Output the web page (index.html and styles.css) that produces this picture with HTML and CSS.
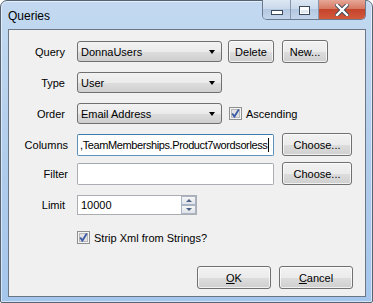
FILE: index.html
```html
<!DOCTYPE html>
<html>
  <head>
    <title>Queries</title>
    <link rel="stylesheet" href="styles.css">
  </head>
  <body>
    <div class="window">
      <div class="titlebar">
        <span class="title">Queries</span>
        <div class="caption">
          <div class="cap-btn cap-min"><span class="glyph-min"></span></div>
          <div class="cap-btn cap-max"><span class="glyph-max"></span></div>
          <div class="cap-btn cap-close">
            <svg width="14" height="12" viewBox="0 0 14 12">
              <path d="M2 1 L12 11 M12 1 L2 11" stroke="#3b4a5c" stroke-width="4.2" stroke-linecap="square"/>
              <path d="M2 1 L12 11 M12 1 L2 11" stroke="#fff" stroke-width="2.4" stroke-linecap="square"/>
            </svg>
          </div>
        </div>
      </div>

      <div class="client">
        <div class="row row-query">
          <label class="lbl">Query</label>
          <div class="combo"><span>DonnaUsers</span><i class="arrow"></i></div>
          <button class="btn btn-delete">Delete</button>
          <button class="btn btn-new">New...</button>
        </div>

        <div class="row row-type">
          <label class="lbl">Type</label>
          <div class="combo"><span>User</span><i class="arrow"></i></div>
        </div>

        <div class="row row-order">
          <label class="lbl">Order</label>
          <div class="combo"><span>Email Address</span><i class="arrow"></i></div>
          <span class="check check-asc">
            <svg width="13" height="13" viewBox="0 0 13 13">
              <rect x="0.5" y="0.5" width="12" height="12" fill="#f4f4f4" stroke="#8e8f8f"/>
              <rect x="2.5" y="2.5" width="8" height="8" fill="#e2e2e2" stroke="#b8b8b8"/>
              <path d="M3.2 6.4 L5.4 9.6 L9.8 2.6" fill="none" stroke="#3d5aa6" stroke-width="1.8"/>
            </svg>
            Ascending
          </span>
        </div>

        <div class="row row-columns">
          <label class="lbl lbl-wide">Columns</label>
          <div class="textbox focused"><span class="tight">,TeamMemberships.Product7wordsorless</span><i class="caret"></i></div>
          <button class="btn btn-choose">Choose...</button>
        </div>

        <div class="row row-filter">
          <label class="lbl lbl-wide">Filter</label>
          <div class="textbox"></div>
          <button class="btn btn-choose">Choose...</button>
        </div>

        <div class="row row-limit">
          <label class="lbl">Limit</label>
          <div class="numeric">
            <span class="num-val">10000</span>
            <div class="spin">
              <div class="spin-btn"><i class="tri-up"></i></div>
              <div class="spin-btn"><i class="tri-down"></i></div>
            </div>
          </div>
        </div>

        <div class="row row-strip">
          <span class="lbl"></span>
          <span class="check">
            <svg width="13" height="13" viewBox="0 0 13 13">
              <rect x="0.5" y="0.5" width="12" height="12" fill="#f4f4f4" stroke="#8e8f8f"/>
              <rect x="2.5" y="2.5" width="8" height="8" fill="#e2e2e2" stroke="#b8b8b8"/>
              <path d="M3.2 6.4 L5.4 9.6 L9.8 2.6" fill="none" stroke="#3d5aa6" stroke-width="1.8"/>
            </svg>
            Strip Xml from Strings?
          </span>
        </div>

        <div class="row row-buttons">
          <button class="btn btn-dialog"><u>O</u>K</button>
          <button class="btn btn-dialog"><u>C</u>ancel</button>
        </div>
      </div>
    </div>
  </body>
</html>
```

FILE: styles.css
```css
/* Windows 7 style dialog */
body {
  margin: 0;
  background: #fff;
  font-family: "Liberation Sans", Arial, sans-serif;
  font-size: 11px;
  color: #000;
}

.window {
  box-sizing: border-box;
  width: 373px;
  height: 303px;
  border: 1px solid #566372;
  border-radius: 7px 7px 2px 2px;
  padding: 0 6px 5px 7px;
  background: linear-gradient(to bottom, #c3d9f1 0%, #bcd5ef 20%, #aecbec 60%, #a5c6ec 100%);
  box-shadow: inset 0 0 0 1px rgba(255, 255, 255, 0.55);
}

.titlebar {
  height: 28px;
  display: flex;
  align-items: flex-start;
}

.title {
  font-size: 12px;
  margin-top: 8px;
  color: #000;
}

.caption {
  margin-left: auto;
  display: flex;
  height: 19px;
  margin-top: -1px;
  border: 1px solid #6c7a8d;
  border-top: none;
  border-radius: 0 0 5px 5px;
  overflow: hidden;
}

.cap-btn {
  height: 19px;
  display: flex;
  align-items: center;
  justify-content: center;
}

.cap-min,
.cap-max {
  width: 27px;
  background: linear-gradient(to bottom, #dde7f3 0%, #cad9eb 45%, #b3c7e0 50%, #c3d5eb 100%);
  border-right: 1px solid #8797ab;
}

.cap-close {
  width: 46px;
  background: linear-gradient(to bottom, #e6a797 0%, #d77a63 45%, #c5442c 50%, #d35a3c 100%);
}

.glyph-min {
  width: 10px;
  height: 3px;
  margin-top: 5px;
  background: #fff;
  border: 1px solid #3b4a5c;
}

.glyph-max {
  box-sizing: border-box;
  width: 11px;
  height: 9px;
  margin-top: 1px;
  border: 1px solid #3b4a5c;
  box-shadow: inset 0 0 0 1px #fff, inset 0 3px 0 0 #fff;
  background: #dfe8f3;
}

.client {
  box-sizing: border-box;
  height: 268px;
  border: 1px solid #6b7785;
  background: #f0f0f0;
  padding-top: 10px;
}

.row {
  display: flex;
  align-items: center;
  height: 23px;
}

.row-type,
.row-order,
.row-limit {
  margin-top: 8px;
}

.row-columns {
  margin-top: 8px;
}

.row-filter {
  margin-top: 6px;
}

.row-strip {
  margin-top: 10px;
}

.row-buttons {
  margin-top: 17px;
  justify-content: flex-end;
  gap: 8px;
  padding-right: 12px;
}

.lbl {
  box-sizing: border-box;
  width: 68px;
  flex: none;
  padding-right: 12px;
  text-align: right;
}

.lbl-wide {
  padding-right: 9px;
}

.combo {
  box-sizing: border-box;
  width: 145px;
  height: 21px;
  border: 1px solid #707070;
  border-radius: 3px;
  background: linear-gradient(to bottom, #f2f2f2 0%, #ebebeb 50%, #dddddd 51%, #cfcfcf 100%);
  display: flex;
  align-items: center;
  padding-left: 3px;
}

.arrow {
  margin-left: auto;
  margin-right: 6px;
  width: 0;
  height: 0;
  border-left: 3.5px solid transparent;
  border-right: 3.5px solid transparent;
  border-top: 4px solid #000;
}

.btn {
  box-sizing: border-box;
  height: 23px;
  border: 1px solid #707070;
  border-radius: 3px;
  background: linear-gradient(to bottom, #f2f2f2 0%, #ebebeb 50%, #dddddd 51%, #cfcfcf 100%);
  font-family: "Liberation Sans", Arial, sans-serif;
  font-size: 11px;
  color: #000;
  padding: 0;
  box-shadow: inset 0 0 0 1px rgba(255, 255, 255, 0.7);
}

.btn-delete {
  width: 46px;
  margin-left: 6px;
}

.btn-new {
  width: 46px;
  margin-left: 8px;
}

.btn-choose {
  width: 70px;
  margin-left: 8px;
}

.btn-dialog {
  width: 74px;
}

.check {
  display: flex;
  align-items: center;
  gap: 4px;
}

.check-asc {
  margin-left: 7px;
}

.textbox {
  box-sizing: border-box;
  width: 197px;
  height: 22px;
  border: 1px solid #abadb3;
  border-top-color: #a3a7b0;
  border-radius: 2px;
  background: #fff;
  display: flex;
  align-items: center;
  padding-left: 2px;
  overflow: hidden;
  white-space: nowrap;
}

.textbox.focused {
  border-color: #5c93bc;
  border-top-color: #3d7bad;
}

.tight {
  letter-spacing: -0.4px;
}

.caret {
  width: 1px;
  height: 14px;
  margin-left: 1px;
  background: #000;
}

.numeric {
  box-sizing: border-box;
  width: 120px;
  height: 20px;
  border: 1px solid #abadb3;
  background: #fff;
  display: flex;
  align-items: center;
  padding-left: 3px;
}

.spin {
  margin-left: auto;
  width: 15px;
  height: 18px;
  display: flex;
  flex-direction: column;
}

.spin-btn {
  box-sizing: border-box;
  flex: 1;
  border: 1px solid #a9b5c4;
  background: linear-gradient(to bottom, #f6f6f6, #dfe3e8);
  display: flex;
  align-items: center;
  justify-content: center;
}

.tri-up {
  width: 0;
  height: 0;
  border-left: 3px solid transparent;
  border-right: 3px solid transparent;
  border-bottom: 3px solid #4e6286;
}

.tri-down {
  width: 0;
  height: 0;
  border-left: 3px solid transparent;
  border-right: 3px solid transparent;
  border-top: 3px solid #4e6286;
}
```
